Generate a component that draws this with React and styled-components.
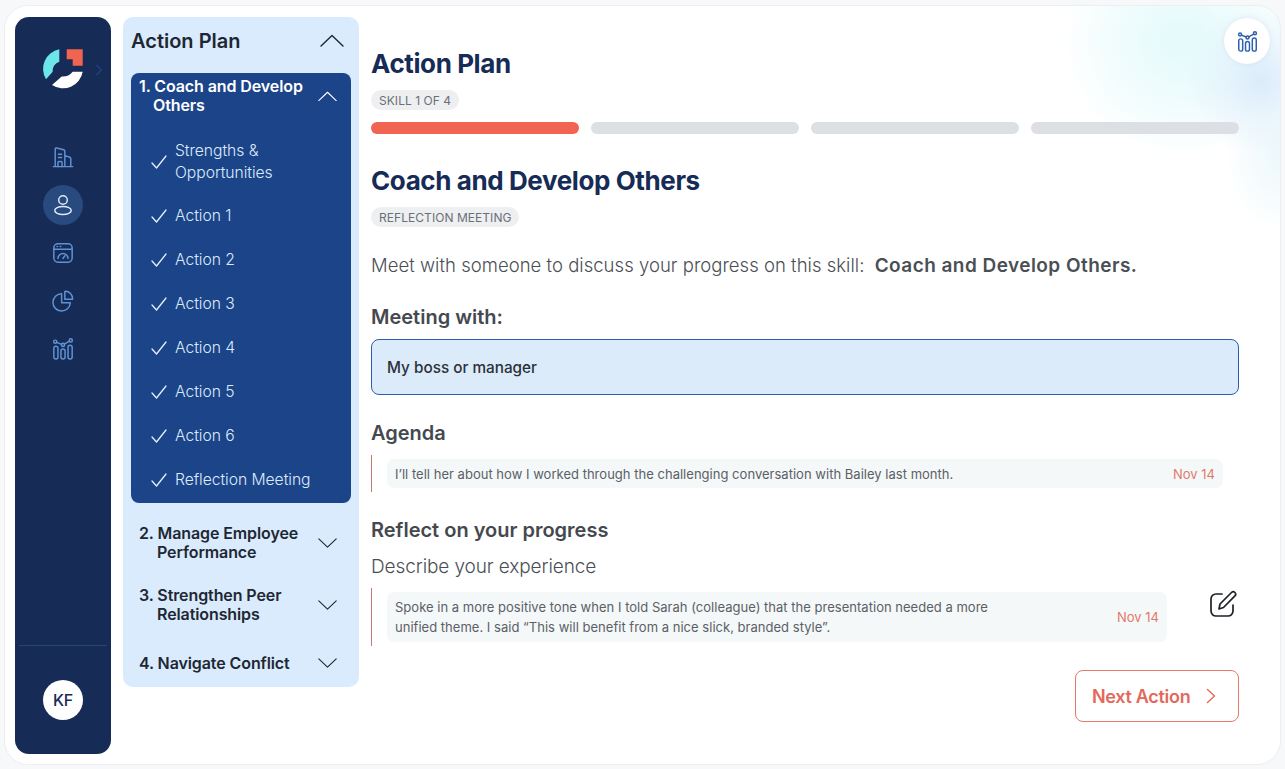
import React from "react";
import styled, { createGlobalStyle } from "styled-components";

const Global = createGlobalStyle`
  html, body { margin: 0; padding: 0; background: #f7f8f9; }
  body { font-family: "Inter", "Noto Sans", sans-serif; width: 1285px; height: 769px; overflow: hidden; }
  * { box-sizing: border-box; }
`;

const Card = styled.div`
  position: relative;
  width: 1277px;
  height: 760px;
  margin: 5px 0 0 4px;
  padding: 11px 41px 0 10px;
  display: flex;
  align-items: flex-start;
  border: 1px solid #eceef1;
  border-radius: 24px;
  overflow: hidden;
  background:
    radial-gradient(circle at 1256px 75px, rgba(214,232,250,.85) 0, rgba(214,232,250,.4) 35px, rgba(214,232,250,0) 75px),
    radial-gradient(ellipse 120px 115px at 1178px 35px, rgba(228,250,251,1) 0, rgba(228,250,251,.55) 55%, rgba(228,250,251,0) 100%),
    radial-gradient(ellipse 55px 75px at 1275px 150px, rgba(228,245,250,.7) 0, rgba(228,245,250,0) 100%),
    #fff;
`;

const Sidebar = styled.aside`
  position: relative;
  flex: 0 0 96px;
  height: 737px;
  background: #162b55;
  border-radius: 14px;
  display: flex;
  flex-direction: column;
  align-items: center;
  padding-top: 32px;
`;
const LogoWrap = styled.div`
  position: relative;
  width: 40px;
  height: 40px;
  margin-bottom: 48px;
`;
const Expand = styled.svg`
  position: absolute;
  left: 52px;
  top: 15px;
`;
const NavItem = styled.div`
  width: 40px;
  height: 40px;
  margin-bottom: 8px;
  border-radius: 50%;
  display: flex;
  align-items: center;
  justify-content: center;
  background: ${(p) => (p.$active ? "#284a7f" : "transparent")};
  color: ${(p) => (p.$active ? "#dcebfa" : "#5f93d6")};
`;
const SideFoot = styled.div`
  margin-top: auto;
  width: 88px;
  height: 109px;
  border-top: 1px solid #234680;
  display: flex;
  justify-content: center;
  padding-top: 34px;
`;
const Avatar = styled.div`
  width: 40px;
  height: 40px;
  border-radius: 50%;
  background: #fff;
  color: #162b55;
  font-size: 16px;
  font-weight: 500;
  letter-spacing: -0.3px;
  display: flex;
  align-items: center;
  justify-content: center;
`;

const Panel = styled.nav`
  flex: 0 0 236px;
  min-width: 0;
  height: 670px;
  margin-left: 12px;
  background: #d9ebfc;
  border-radius: 10px;
  padding: 0 8px;
  color: #1e2733;
`;
const PanelHead = styled.div`
  height: 48px;
  padding-right: 7px;
  margin-bottom: 8px;
  display: flex;
  align-items: center;
  justify-content: space-between;
  font-size: 20px;
  font-weight: 600;
  letter-spacing: 0;
`;
const Active = styled.div`
  height: 430px;
  background: #1c4489;
  border-radius: 8px;
  color: #fff;
  padding: 4px 0 0 8px;
`;
const SkillRow = styled.div`
  display: flex;
  align-items: center;
  justify-content: space-between;
  padding-right: 14px;
  height: ${(p) => p.$h}px;
  margin: ${(p) => p.$mt || 0}px 0 ${(p) => p.$mb || 0}px ${(p) => p.$ml || 0}px;
  color: inherit;
`;
const SkillName = styled.div`
  font-size: 16px;
  font-weight: 600;
  line-height: 19px;
  letter-spacing: -0.1px;
  padding-left: ${(p) => p.$indent}px;
  text-indent: -${(p) => p.$indent}px;
  width: 176px;
`;
const Step = styled.div`
  display: flex;
  align-items: center;
  height: ${(p) => (p.$tall ? 64 : 44)}px;
  padding-left: 12px;
  gap: 8px;
  color: #dcebfa;
  font-size: 15.7px;
  font-weight: 300;
  line-height: 22px;
  letter-spacing: -0.05px;
`;
const StepText = styled.span`
  width: 150px;
`;

const Main = styled.main`
  flex: 1;
  min-width: 0;
  margin-left: 12px;
  padding-top: 31px;
`;
const H = styled.h1`
  margin: 0;
  font-size: 26px;
  line-height: 32px;
  font-weight: 700;
  letter-spacing: -0.4px;
  color: #162b55;
`;
const Tag = styled.div`
  display: inline-flex;
  align-items: center;
  height: 20px;
  margin-top: ${(p) => p.$mt}px;
  padding: 0 8px;
  border-radius: 10px;
  background: #eeeff1;
  color: #6b7078;
  font-size: 12px;
  font-weight: 400;
  letter-spacing: 0.05px;
  vertical-align: top;
`;
const Progress = styled.div`
  display: grid;
  grid-template-columns: repeat(4, 1fr);
  gap: 12px;
  margin: 12px 0 31px;
`;
const Bar = styled.div`
  height: 12px;
  border-radius: 6px;
  background: ${(p) => (p.$on ? "#f26452" : "#dcdfe4")};
`;
const Lead = styled.p`
  margin: 27px 0 0;
  font-size: 18.5px;
  line-height: 22px;
  color: #4b4f55;
  font-weight: 300;
  letter-spacing: 0.03px;
  b { font-size: 19px; font-weight: 600; margin-left: 5px; letter-spacing: 0.45px; }
`;
const Sub = styled.h3`
  margin: ${(p) => p.$mt}px 0 0;
  font-size: 20px;
  line-height: 24px;
  font-weight: 600;
  letter-spacing: 0;
  color: #45494f;
`;
const Select = styled.div`
  height: 56px;
  margin-top: 10px;
  padding-left: 15px;
  display: flex;
  align-items: center;
  background: #dcebfa;
  border: 1px solid #2b5fae;
  border-radius: 8px;
  font-size: 15.3px;
  font-weight: 500;
  color: #2b3138;
`;
const NoteRow = styled.div`
  display: flex;
  align-items: flex-start;
  margin-top: ${(p) => p.$mt}px;
`;
const Note = styled.div`
  position: relative;
  display: flex;
  align-items: center;
  justify-content: space-between;
  flex: 0 0 ${(p) => p.$w}px;
  height: ${(p) => p.$h}px;
  margin: 4px 0 4px 16px;
  padding: 0 8px;
  border-radius: 7px;
  background: #f4f8f9;
  color: #5b6066;
  font-size: 13px;
  font-weight: 400;
  line-height: 20px;
  letter-spacing: 0.02px;
  &::before {
    content: "";
    position: absolute;
    left: -16px;
    top: -4px;
    bottom: -4px;
    width: 1px;
    background: #c8796f;
  }
`;
const NoteText = styled.span`
  width: ${(p) => p.$w}px;
`;
const Date = styled.span`
  color: #e2796b;
  font-size: 13px;
  white-space: nowrap;
`;
const Describe = styled.div`
  margin-top: 13px;
  font-size: 19px;
  line-height: 24px;
  font-weight: 300;
  letter-spacing: -0.1px;
  color: #4b4f55;
`;
const Edit = styled.svg`
  margin: 2px 0 0 42px;
  color: #1d2126;
`;
const Actions = styled.div`
  display: flex;
  justify-content: flex-end;
  margin-top: 24px;
`;
const NextBtn = styled.button`
  width: 164px;
  height: 52px;
  padding: 0 0 0 16px;
  display: flex;
  align-items: center;
  gap: 16px;
  background: #fff;
  border: 1px solid #e2796b;
  border-radius: 8px;
  color: #e2695a;
  font-family: inherit;
  font-size: 18px;
  font-weight: 600;
  letter-spacing: -0.3px;
`;
const Floating = styled.div`
  position: absolute;
  left: 1219px;
  top: 12px;
  width: 46px;
  height: 46px;
  border-radius: 50%;
  background: #fff;
  box-shadow: 0 0 4px rgba(200, 215, 230, .5);
  color: #2f60ae;
  display: flex;
  align-items: center;
  justify-content: center;
`;

const Chevron = ({ up, size = 24, w = 1.4 }) => (
  <svg width={size} height={size * 0.55} viewBox="0 0 24 13" fill="none" stroke="currentColor" strokeWidth={w} strokeLinecap="round" strokeLinejoin="round">
    <path d={up ? "M1 12 12 1.5 23 12" : "M1 1 12 11.5 23 1"} />
  </svg>
);
const Check = () => (
  <svg width="16" height="14" viewBox="0 0 16 14" fill="none" stroke="#e6f0fb" strokeWidth="1.3" strokeLinecap="round" strokeLinejoin="round" style={{ flex: "none" }}>
    <path d="M1 8l4.5 5L15 1" />
  </svg>
);
const Svg = ({ children, s = 22, w = 1.6, ...r }) => (
  <svg width={s} height={s} viewBox="0 0 24 24" fill="none" stroke="currentColor" strokeWidth={w} strokeLinecap="round" strokeLinejoin="round" {...r}>
    {children}
  </svg>
);
const Chart = ({ s, w }) => (
  <Svg s={s} w={w}>
    <rect x="2" y="9" width="4.5" height="14" rx="2.25" />
    <rect x="9.75" y="12" width="4.5" height="11" rx="2.25" />
    <rect x="17.5" y="8" width="4.5" height="15" rx="2.25" />
    <circle cx="3.5" cy="4" r="1.7" />
    <circle cx="12" cy="7.5" r="1.7" />
    <circle cx="20.5" cy="2.6" r="1.7" />
    <path d="M5.1 4.7 10.4 6.9M13.5 6.7 19 3.5" />
  </Svg>
);

const steps = ["Action 1", "Action 2", "Action 3", "Action 4", "Action 5", "Action 6", "Reflection Meeting"];

export default function App() {
  return (
    <>
      <Global />
      <Card>
        <Sidebar>
          <LogoWrap>
            <svg width="40" height="40" viewBox="0 0 40 40">
              <path fill="#6de6ea" d="M16.3.3A20 20 0 0 0 3 30.3l6.7-7.5A9.5 9.5 0 0 1 16.3 12.7Z" />
              <path fill="#fff" d="M9 36A20 20 0 0 0 39.7 22.7h-10A13 13 0 0 1 18.7 27.5Z" />
              <path fill="#f26452" d="M23.7.3h16v16.4h-10v-6.4h-6z" />
            </svg>
            <Expand width="8" height="12" viewBox="0 0 8 12" fill="none" stroke="#1d4488" strokeWidth="1.4">
              <path d="M1.5 1 6.5 6 1.5 11" />
            </Expand>
          </LogoWrap>
          <NavItem>
            <Svg>
              <path d="M1.5 22.5h21M3.5 22.5V3.5c0-1 .8-1.7 1.7-1.4l7.5 2c.8.2 1.3.9 1.3 1.7v16.7M14 10.5l5 1.5c.8.3 1.5 1 1.5 1.8v8.7" />
              <path d="M7 9h3.5M7 12.5h3.5M6.5 22.5v-4.5c0-.6.4-1 1-1h2.5c.6 0 1 .4 1 1v4.5" />
            </Svg>
          </NavItem>
          <NavItem $active>
            <Svg>
              <circle cx="12" cy="6.5" r="4.7" />
              <ellipse cx="12" cy="18" rx="9" ry="4.3" />
            </Svg>
          </NavItem>
          <NavItem>
            <Svg>
              <rect x="2" y="2" width="20" height="20" rx="4.5" />
              <path d="M2 8h20M5.5 5h.5M9 5h.5" />
              <path d="M6.5 18a5.5 5.5 0 0 1 11 0M12 18l2-3" />
            </Svg>
          </NavItem>
          <NavItem>
            <Svg>
              <path d="M10.5 4a9.5 9.5 0 1 0 9.5 10h-9.5z" />
              <path d="M14 1.5a8 8 0 0 1 8.5 8.5H14z" />
            </Svg>
          </NavItem>
          <NavItem>
            <Chart />
          </NavItem>
          <SideFoot>
            <Avatar>KF</Avatar>
          </SideFoot>
        </Sidebar>

        <Panel>
          <PanelHead>
            Action Plan
            <Chevron up />
          </PanelHead>
          <Active>
            <SkillRow $h={38} $mb={15}>
              <SkillName $indent={14}>1. Coach and Develop Others</SkillName>
              <Chevron up size={19} />
            </SkillRow>
            <Step $tall>
              <Check />
              <StepText>Strengths &amp; Opportunities</StepText>
            </Step>
            {steps.map((s) => (
              <Step key={s}>
                <Check />
                <StepText>{s}</StepText>
              </Step>
            ))}
          </Active>
          <SkillRow $h={38} $ml={8} $mt={21}>
            <SkillName $indent={18}>2. Manage Employee Performance</SkillName>
            <Chevron size={19} />
          </SkillRow>
          <SkillRow $h={38} $ml={8} $mt={24}>
            <SkillName $indent={18}>3. Strengthen Peer Relationships</SkillName>
            <Chevron size={19} />
          </SkillRow>
          <SkillRow $h={20} $ml={8} $mt={29}>
            <SkillName $indent={18}>4. Navigate Conflict</SkillName>
            <Chevron size={19} />
          </SkillRow>
        </Panel>

        <Main>
          <H>Action Plan</H>
          <Tag $mt={10}>SKILL 1 OF 4</Tag>
          <Progress>
            <Bar $on />
            <Bar />
            <Bar />
            <Bar />
          </Progress>
          <H>Coach and Develop Others</H>
          <Tag $mt={10}>REFLECTION MEETING</Tag>
          <Lead>
            Meet with someone to discuss your progress on this skill: <b>Coach and Develop Others.</b>
          </Lead>
          <Sub $mt={28}>Meeting with:</Sub>
          <Select>My boss or manager</Select>
          <Sub $mt={26}>Agenda</Sub>
          <NoteRow $mt={10}>
            <Note $w={836} $h={29}>
              <NoteText>I’ll tell her about how I worked through the challenging conversation with Bailey last month.</NoteText>
              <Date>Nov 14</Date>
            </Note>
          </NoteRow>
          <Sub $mt={26}>Reflect on your progress</Sub>
          <Describe>Describe your experience</Describe>
          <NoteRow $mt={9}>
            <Note $w={780} $h={50}>
              <NoteText $w={610}>Spoke in a more positive tone when I told Sarah (colleague) that the presentation needed a more unified theme. I said “This will benefit from a nice slick, branded style”.</NoteText>
              <Date>Nov 14</Date>
            </Note>
            <Edit width="28" height="28" viewBox="0 0 28 28" fill="none" stroke="currentColor" strokeWidth="1.7" strokeLinecap="round" strokeLinejoin="round">
              <path d="M13 4H7a5 5 0 0 0-5 5v12a5 5 0 0 0 5 5h12a5 5 0 0 0 5-5v-6" />
              <path d="M10 19l1-5L22.5 2.5a2.4 2.4 0 0 1 3.4 3.4L14.5 17.5z" />
            </Edit>
          </NoteRow>
          <Actions>
            <NextBtn>
              Next Action
              <svg width="10" height="16" viewBox="0 0 10 16" fill="none" stroke="currentColor" strokeWidth="1.4" strokeLinecap="round" strokeLinejoin="round">
                <path d="M1.5 1.5 8.5 8 1.5 14.5" />
              </svg>
            </NextBtn>
          </Actions>
        </Main>

        <Floating>
          <Chart s={21} w={1.7} />
        </Floating>
      </Card>
    </>
  );
}
